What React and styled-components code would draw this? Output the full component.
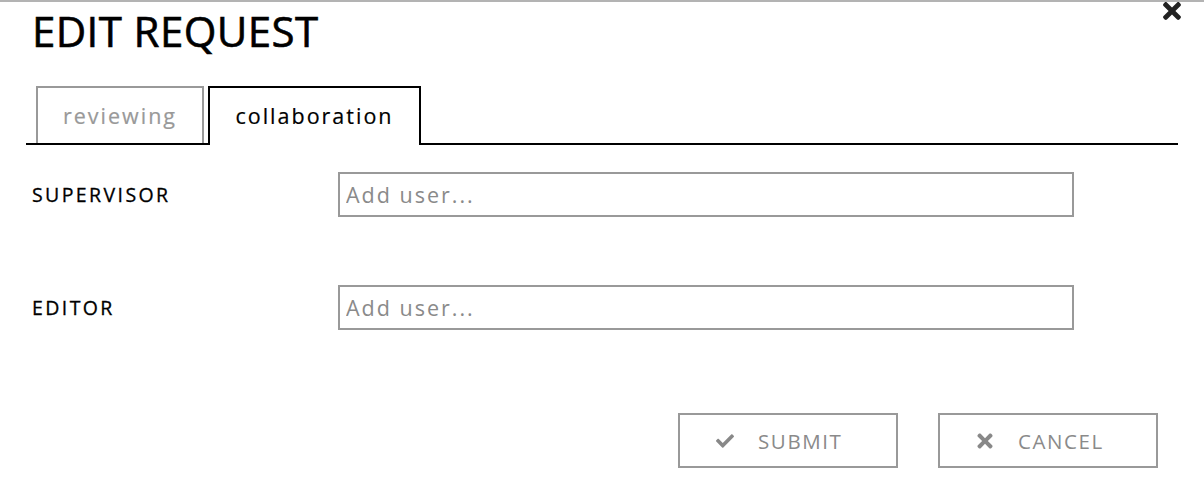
import styled, { createGlobalStyle } from "styled-components";
import { FaCheck, FaTimes } from "react-icons/fa";

const GlobalStyle = createGlobalStyle`
  body {
    margin: 0;
    background: #fff;
    font-family: "Open Sans", "DejaVu Sans", sans-serif;
  }
`;

const App = () => {
  return (
    <Modal>
      <GlobalStyle />
      <CloseBtn aria-label="close">
        <FaTimes size={26} />
      </CloseBtn>
      <Title>EDIT REQUEST</Title>
      <Tabs>
        <Tab>reviewing</Tab>
        <Tab $active>collaboration</Tab>
      </Tabs>
      <Form>
        <Row>
          <Label>SUPERVISOR</Label>
          <Input placeholder="Add user..." />
        </Row>
        <Row>
          <Label>EDITOR</Label>
          <Input placeholder="Add user..." />
        </Row>
      </Form>
      <Actions>
        <ActionBtn>
          <IconBox>
            <FaCheck size={18} />
          </IconBox>
          SUBMIT
        </ActionBtn>
        <ActionBtn>
          <IconBox>
            <FaTimes size={22} />
          </IconBox>
          CANCEL
        </ActionBtn>
      </Actions>
    </Modal>
  );
};

const Modal = styled.div`
  position: relative;
  width: 1204px;
  height: 494px;
  box-sizing: border-box;
  border-top: 2px solid #b3b3b3;
  padding: 0 26px;
`;

const CloseBtn = styled.button`
  position: absolute;
  top: -4px;
  right: 19px;
  padding: 0;
  border: none;
  background: none;
  color: #222;
  cursor: pointer;
  display: flex;
`;

const Title = styled.h1`
  margin: 8px 0 0 6px;
  font-size: 42px;
  line-height: 1;
  font-weight: 400;
  letter-spacing: 0.4px;
  color: #000;
  -webkit-text-stroke: 0.6px #000;
`;

const Tabs = styled.div`
  display: flex;
  align-items: flex-end;
  gap: 4px;
  margin-top: 34px;
  padding-left: 10px;
  border-bottom: 2px solid #000;
`;

const Tab = styled.div`
  display: flex;
  align-items: center;
  justify-content: center;
  box-sizing: border-box;
  height: ${(p) => (p.$active ? "59px" : "57px")};
  width: ${(p) => (p.$active ? "213px" : "168px")};
  margin-bottom: ${(p) => (p.$active ? "-2px" : "0")};
  padding-bottom: ${(p) => (p.$active ? "2px" : "0")};
  border: 2px solid ${(p) => (p.$active ? "#000" : "#999")};
  border-bottom: none;
  background: #fff;
  font-size: 21.5px;
  line-height: 1;
  letter-spacing: 2px;
  color: ${(p) => (p.$active ? "#000" : "#999")};
  -webkit-text-stroke: 0.2px ${(p) => (p.$active ? "#000" : "#999")};
`;

const Form = styled.div`
  display: flex;
  flex-direction: column;
  gap: 68px;
  margin-top: 27px;
  padding-left: 6px;
`;

const Row = styled.div`
  display: grid;
  grid-template-columns: 306px 736px;
  align-items: center;
`;

const Label = styled.label`
  font-size: 19.5px;
  line-height: 1;
  letter-spacing: 2.4px;
  color: #000;
  -webkit-text-stroke: 0.3px #000;
`;

const Input = styled.input`
  box-sizing: border-box;
  height: 45px;
  width: 736px;
  border: 2px solid #999;
  padding: 0 6px;
  font-family: "Open Sans", "DejaVu Sans", sans-serif;
  font-size: 21.5px;
  letter-spacing: 2px;
  color: #333;
  outline: none;
  &::placeholder {
    color: #8a8a8a;
  }
`;

const Actions = styled.div`
  display: flex;
  justify-content: flex-end;
  gap: 40px;
  margin-top: 83px;
  padding-right: 20px;
`;

const ActionBtn = styled.button`
  display: flex;
  align-items: center;
  gap: 21px;
  box-sizing: border-box;
  width: 220px;
  height: 55px;
  padding: 0 0 0 33px;
  border: 2px solid #999;
  background: #fff;
  font-family: "Open Sans", "DejaVu Sans", sans-serif;
  font-size: 20.5px;
  letter-spacing: 1.6px;
  color: #8a8a8a;
  cursor: pointer;
`;

const IconBox = styled.span`
  display: flex;
  align-items: center;
  justify-content: center;
  width: 24px;
  color: #888;
`;

export default App;
